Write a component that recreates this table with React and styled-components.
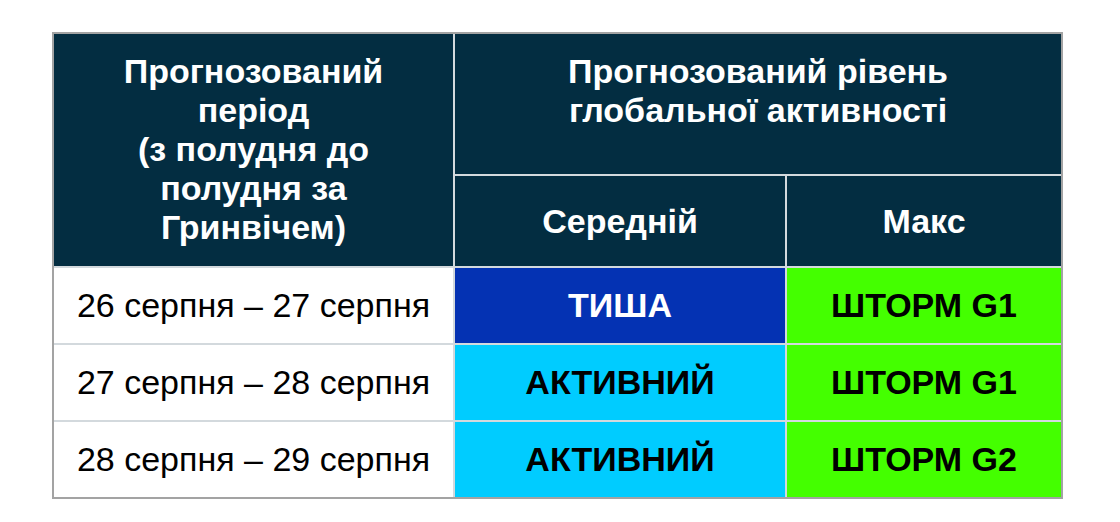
import React from "react";
import styled, { createGlobalStyle } from "styled-components";

const Global = createGlobalStyle`
  html, body { margin: 0; padding: 0; background: #ffffff; }
  body { font-family: "Liberation Sans", Arial, sans-serif; }
`;

const Page = styled.div`
  padding: 32px 0 0 52px;
`;

const Frame = styled.div`
  width: 1007px;
  border: 2px solid #a3a3a3;
  background: #d3d9dd;
`;

const Grid = styled.div`
  display: grid;
  grid-template-columns: 399px 330px 274px;
  grid-template-rows: 140px 90px 75px 75px 75px;
  gap: 2px;
`;

const HeadCell = styled.div`
  background: #032d41;
  color: #ffffff;
  font-weight: 700;
  font-size: 34px;
  line-height: 39px;
  text-align: center;
  display: flex;
  justify-content: center;
  align-items: ${(p) => (p.$top ? "flex-start" : "center")};
  padding-top: ${(p) => (p.$top ? "18px" : "0")};
  grid-row: ${(p) => p.$row || "auto"};
  grid-column: ${(p) => p.$col || "auto"};
`;

const DateCell = styled.div`
  background: #ffffff;
  color: #000000;
  font-size: 34px;
  display: flex;
  align-items: center;
  justify-content: center;
`;

const LevelCell = styled.div`
  background: ${(p) => p.$bg};
  color: ${(p) => p.$fg};
  font-size: 34px;
  font-weight: 700;
  display: flex;
  align-items: center;
  justify-content: center;
`;

const levels = {
  quiet: { bg: "#0432b3", fg: "#ffffff" },
  active: { bg: "#00ccff", fg: "#000000" },
  storm: { bg: "#44ff00", fg: "#000000" },
};

const rows = [
  { date: "26 серпня – 27 серпня", avg: ["ТИША", "quiet"], max: ["ШТОРМ G1", "storm"] },
  { date: "27 серпня – 28 серпня", avg: ["АКТИВНИЙ", "active"], max: ["ШТОРМ G1", "storm"] },
  { date: "28 серпня – 29 серпня", avg: ["АКТИВНИЙ", "active"], max: ["ШТОРМ G2", "storm"] },
];

export default function App() {
  return (
    <Page>
      <Global />
      <Frame>
        <Grid>
          <HeadCell $top $row="1 / span 2" $col="1">
            Прогнозований
            <br />
            період
            <br />
            (з полудня до
            <br />
            полудня за
            <br />
            Гринвічем)
          </HeadCell>
          <HeadCell $top $row="1" $col="2 / span 2">
            Прогнозований рівень
            <br />
            глобальної активності
          </HeadCell>
          <HeadCell $row="2" $col="2">Середній</HeadCell>
          <HeadCell $row="2" $col="3">Макс</HeadCell>
          {rows.map((r) => (
            <React.Fragment key={r.date}>
              <DateCell>{r.date}</DateCell>
              <LevelCell $bg={levels[r.avg[1]].bg} $fg={levels[r.avg[1]].fg}>
                {r.avg[0]}
              </LevelCell>
              <LevelCell $bg={levels[r.max[1]].bg} $fg={levels[r.max[1]].fg}>
                {r.max[0]}
              </LevelCell>
            </React.Fragment>
          ))}
        </Grid>
      </Frame>
    </Page>
  );
}
